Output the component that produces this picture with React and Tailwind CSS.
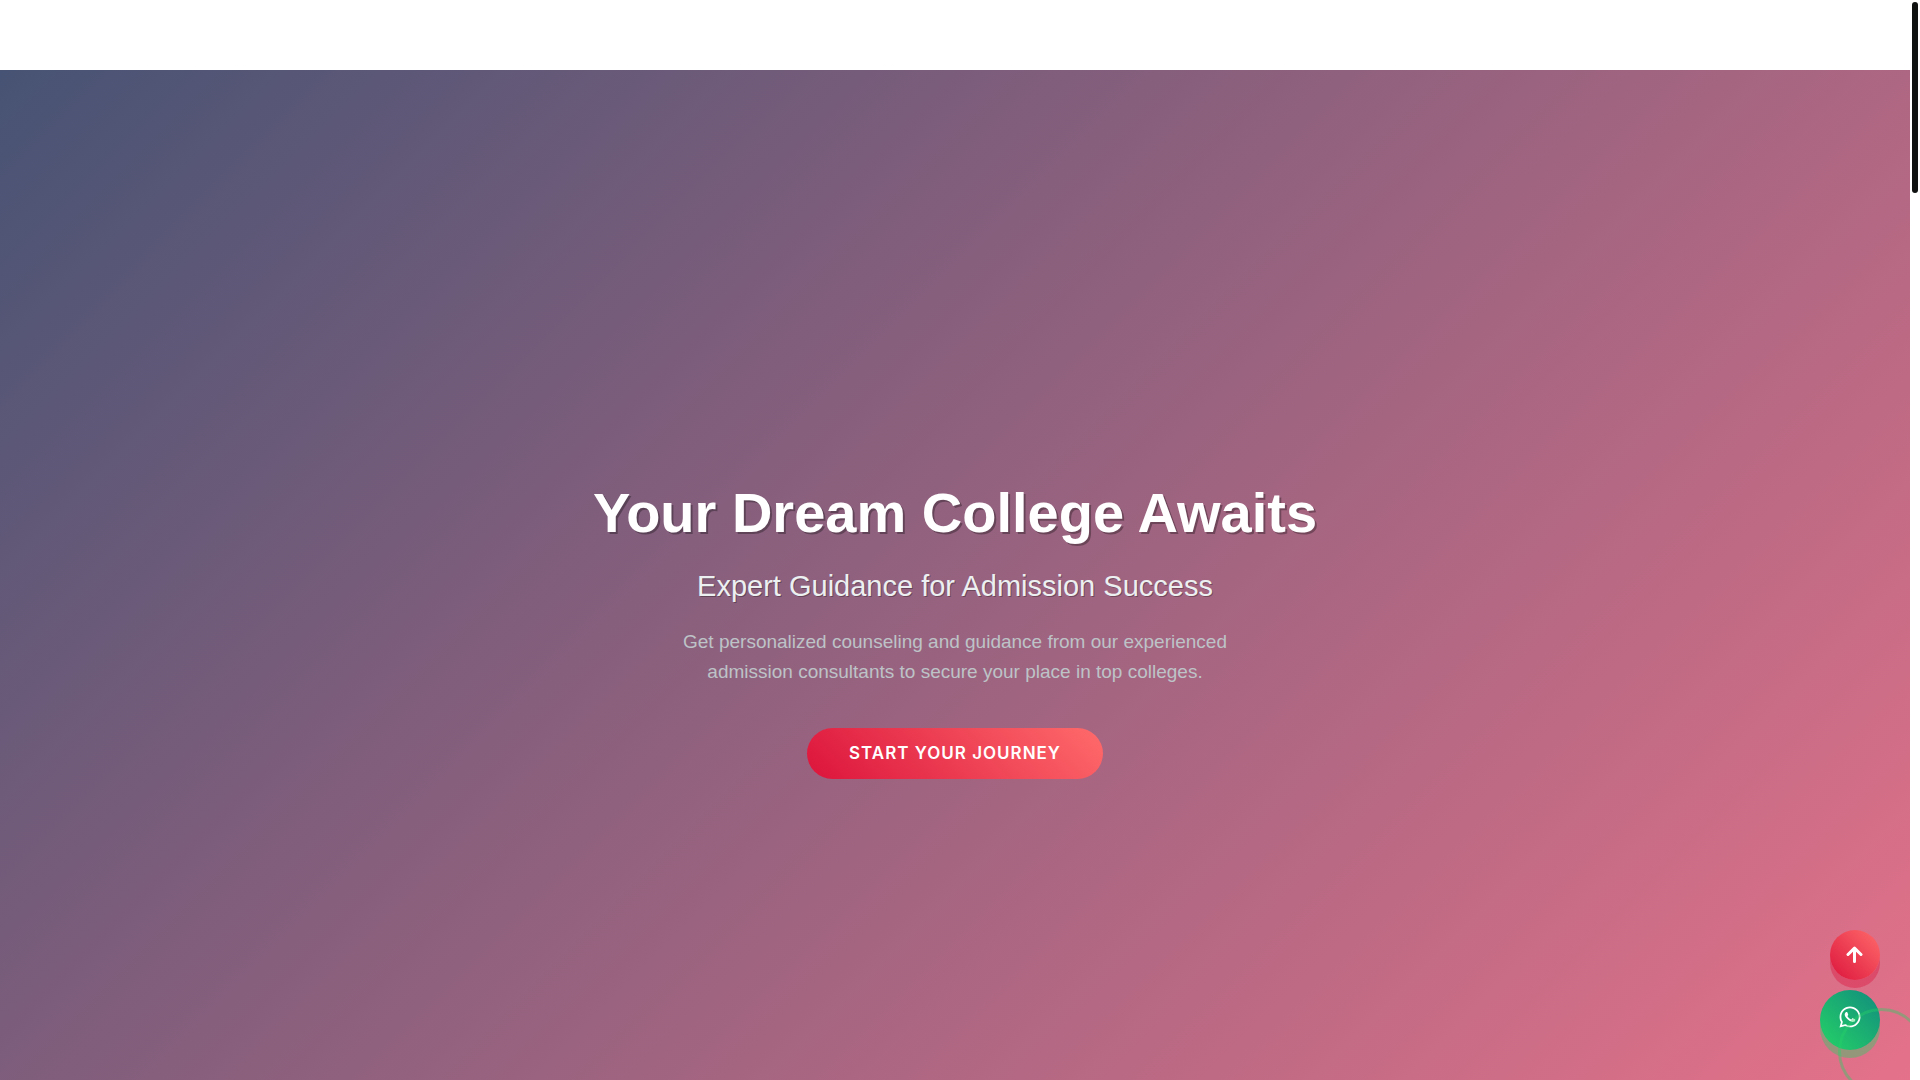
import React from "react";
import { FaWhatsapp } from "react-icons/fa";

function ArrowUp() {
  return (
    <svg viewBox="0 0 18 18" className="h-[18px] w-[18px]" fill="none" stroke="currentColor" strokeWidth="3" strokeLinecap="round" strokeLinejoin="round" aria-hidden="true">
      <path d="M8.5 15.5V2.5M2 8.5L8.5 2.2L15 8.5" />
    </svg>
  );
}

function FloatingActions() {
  return (
    <div className="fixed right-[40px] bottom-[30px] flex flex-col items-end gap-[10px]">
      <button
        type="button"
        aria-label="Back to top"
        className="flex h-[50px] w-[50px] items-center justify-center rounded-full bg-[linear-gradient(45deg,#dc143c,#ff6b6b)] text-white shadow-[0_8px_0_rgba(220,20,60,0.4)]"
      >
        <ArrowUp />
      </button>
      <a
        href="#whatsapp"
        aria-label="Chat on WhatsApp"
        className="relative flex h-[60px] w-[60px] items-center justify-center rounded-full bg-[linear-gradient(45deg,#25d366,#128c7e)] pb-1.5 text-white shadow-[0_8px_0_rgba(37,211,102,0.4)]"
      >
        <FaWhatsapp className="h-6 w-6" aria-hidden="true" />
        <span className="absolute top-[18px] left-[18px] h-[87px] w-[87px] rounded-full border-[3px] border-[#25d366]/40" />
      </a>
    </div>
  );
}

function Hero() {
  return (
    <main className="flex h-screen shrink-0 flex-col items-center justify-center bg-[linear-gradient(135deg,#475374,#e8728a)] px-6 pt-[38px] text-center font-['Liberation_Sans',Arial,sans-serif]">
      <h1 className="text-[56px] leading-[67px] font-bold text-white [text-shadow:2px_2px_0_rgba(0,0,0,0.3)]">
        Your Dream College Awaits
      </h1>
      <h2 className="mt-[17px] text-[29px] leading-[46px] font-light text-[#ecf0f1] [text-shadow:1px_1px_0_rgba(0,0,0,0.3)]">
        Expert Guidance for Admission Success
      </h2>
      <p className="mt-[18px] max-w-[600px] text-[19px] leading-[30px] text-[#bdc3c7]">
        Get personalized counseling and guidance from our experienced admission consultants to secure your place in top
        colleges.
      </p>
      <a
        href="#journey"
        className="mt-[41px] rounded-full bg-[linear-gradient(45deg,#dc143c,#ff6b6b)] px-[42px] py-3 font-['Inter',sans-serif] text-[17px] leading-[27px] font-semibold tracking-[1px] text-white uppercase"
      >
        Start Your Journey
      </a>
    </main>
  );
}

export default function App() {
  return (
    <div className="flex h-screen overflow-hidden bg-white">
      <div className="flex min-w-0 flex-1 flex-col overflow-hidden">
        <header className="h-[70px] shrink-0 bg-white" />
        <Hero />
      </div>
      <FloatingActions />
      <div className="relative z-10 w-[10px] shrink-0 bg-white p-0.5" aria-hidden="true">
        <div className="h-[191px] w-[6px] rounded-full bg-[#0f1111]" />
      </div>
    </div>
  );
}
